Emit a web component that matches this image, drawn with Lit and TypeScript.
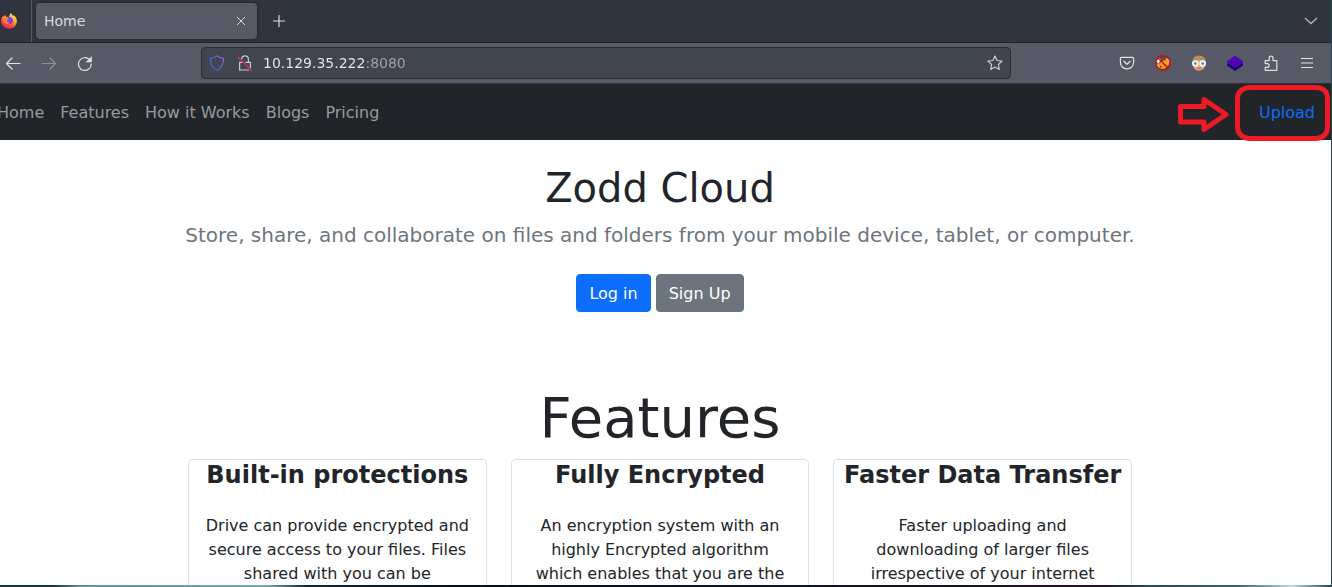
import { LitElement, html, css, svg } from "lit";
import { customElement } from "lit/decorators.js";

@customElement("browser-tabs")
class BrowserTabs extends LitElement {
  static styles = css`
    :host { display: block; }
    .strip { display: flex; align-items: center; height: 42px; background: #30343f; border-bottom: 1px solid #1f222b; color: #d6d9e2; }
    .pin { display: flex; align-items: center; justify-content: center; width: 43px; height: 42px; padding-right: 2px; border-right: 1px solid #565a66; box-sizing: border-box; }
    .tab { display: flex; align-items: center; justify-content: space-between; box-sizing: border-box; width: 221px; height: 36px; margin-left: 4px; padding: 0 8px; border-radius: 4px; background: #585966; box-shadow: 0 0 3px #1c1e26; font-size: 14px; }
    button { display: flex; align-items: center; justify-content: center; padding: 0; border: 0; background: none; color: inherit; }
    .close { width: 16px; height: 16px; }
    .new { width: 36px; height: 36px; margin-left: 4px; }
    .list { width: 36px; height: 36px; margin-left: auto; margin-right: 2px; color: #aeb2bd; }
  `;
  render() {
    return html`<div class="strip">
      <div class="pin">
        <svg width="16" height="16" viewBox="0 0 16 16">
          <defs>
            <linearGradient id="fx" x1=".8" y1="0" x2=".25" y2="1"><stop offset="0" stop-color="#fff44f" /><stop offset=".35" stop-color="#ffb02e" /><stop offset=".65" stop-color="#ff5634" /><stop offset="1" stop-color="#e0155f" /></linearGradient>
          </defs>
          <path fill="url(#fx)" d="M9.8 0c1.200 1 1.700 1.900 1.900 3l1.100-.8c2 1.500 3.200 3.600 3.100 6.200A7.900 7.600 0 0 1 8 15.800 7.900 7.600 0 0 1 .1 8.200C.1 5.700 1 3.900 2.200 2.400l.4 1.500L4.400 2l.6 1.700 2.700.2C8.500 2.700 8.700 1.300 9.800 0z" />
          <circle cx="8.400" cy="7.400" r="3.500" fill="#7a3de8" />
          <path d="M2.500 5.600c2-1.200 4.600-.8 5.700.4-1.200.2-1.600 1-2.400 1.600.4 1.500 1.800 2 3.500 1.400-1 2.200-5.100 2.600-6.500.5z" fill="#ff7a35" />
        </svg>
      </div>
      <div class="tab"><span>Home</span>
        <button class="close" aria-label="Close tab"><svg width="10" height="10" viewBox="0 0 10 10"><path d="M1 1l8 8M9 1L1 9" stroke="currentColor" stroke-width="1" /></svg></button>
      </div>
      <button class="new" aria-label="New tab"><svg width="14" height="14" viewBox="0 0 14 14"><path d="M7 1v12M1 7h12" stroke="currentColor" stroke-width="1.200" /></svg></button>
      <button class="list" aria-label="List all tabs"><svg width="14" height="14" viewBox="0 0 14 14" fill="none"><path d="M1 4l6 5.500L13 4" stroke="currentColor" stroke-width="1.300" /></svg></button>
    </div>`;
  }
}

const icon = (body: unknown) =>
  html`<svg width="16" height="16" viewBox="0 0 16 16" fill="none" stroke="currentColor" stroke-width="1.2" stroke-linecap="round" stroke-linejoin="round">${body}</svg>`;

const back = svg`<path d="M15 8.500H1.500M7 3L1.500 8.500 7 14" />`;
const forward = svg`<path d="M1 8.500h13.500M9 3l5.500 5.500L9 14" />`;
const reload = svg`<path d="M14.300 9A6.400 6.400 0 1 1 12.200 4.300" /><path d="M14.500 2v5h-5z" fill="currentColor" stroke-width=".6" />`;
const shield = svg`<defs><linearGradient id="sh" x1="1" y1="0" x2="0" y2="1"><stop offset="0" stop-color="#9a63e8" /><stop offset=".6" stop-color="#4568e0" /><stop offset="1" stop-color="#2f63d8" /></linearGradient></defs><path stroke="url(#sh)" d="M8 .9C6 2.600 3.800 3.100 1.400 3.300c-.1 5.200 1 9.200 6.600 11.900 5.600-2.700 6.700-6.700 6.600-11.900C12.200 3.100 10 2.600 8 .9z" />`;
const lock = svg`<path d="M4.700 3.600C5 1.700 6.300.8 8 .8c2 0 3.400 1.400 3.400 3.400v2.600M9 7.300h4.400v5.500M11.500 15H2.600V7.300h2.500" /><path d="M1.300 2.200l13.200 13.200" stroke="#e22850" stroke-width="1.400" />`;
const star = svg`<path d="M8 1l2.100 4.500 4.900.6-3.600 3.400.9 4.900L8 12l-4.300 2.400.9-4.900L1 6.100l4.900-.6z" />`;
const pocket = svg`<path d="M2.500 2.400h11c.7 0 1.100.4 1.100 1.100V7.500c0 3.700-2.900 6.300-6.600 6.300S1.400 11.200 1.400 7.500v-4c0-.7.4-1.100 1.100-1.100zM4.800 6.300L8 9.300l3.200-3" />`;
const noFox = svg`<g stroke="none"><circle cx="8" cy="8" r="7" fill="#5d4b48" /><path d="M1.200 6l3-3.500L6 5 3 9zM10.500 3l3.500 1 .5 4zM1.500 10l2.500-1 1 4.500z" fill="#eee" /><path d="M7 6.500l5-2.500 1.500 2 1 3-3 3.500-3 1.500-5-1L3 9.500 4.500 8z" fill="#f59a1d" /><path d="M4.500 10.500l2.500 1-1.500 1.200zM8.500 9.500l2.500.2-1 1.500z" fill="#5a3212" /></g><circle cx="8" cy="8" r="7.200" stroke="#c90d12" stroke-width="1.400" /><path d="M3 3l10 10" stroke="#c90d12" stroke-width="1.300" />`;
const face = svg`<g stroke="none"><path d="M1.200 9C.4 3.500 3.500.5 8 .5s7.600 3 6.800 8.500z" fill="#b08f66" /><path d="M2.300 8c1-2 3-3 5.700-3.200 2.700.2 4.700 1.200 5.700 3.200v3c0 2.700-2.700 4.500-5.700 4.500S2.300 13.700 2.300 11z" fill="#e5a77d" /><path d="M5.500 12.500h5l-1 1.500h-3z" fill="#cf6a55" /></g><circle cx="4.300" cy="8.500" r="2.500" fill="#75bac8" stroke="#f3fafa" stroke-width="1.700" /><circle cx="11.700" cy="8.500" r="2.500" fill="#75bac8" stroke="#f3fafa" stroke-width="1.700" /><path d="M4.300 8.500h.1M11.700 8.500h.1" stroke="#3f7b8a" stroke-width="1.500" />`;
const layers = svg`<g stroke="none"><path d="M0 8.500v2L8 16l8-5.500v-2z" fill="#21007a" /><path d="M8 .6l8 5.600v1.500L8 13 0 7.700V6.200z" fill="#4b08b5" /></g>`;
const puzzle = svg`<path d="M2.500 15.300h11.300V5.600H10V3a1.900 1.900 0 0 0-3.800 0v2.600H2.200v3h2a1.900 1.900 0 0 1 0 3.800h-2v2.600z" />`;
const menu = svg`<path d="M2 3.500h12M2 8h12M2 12.500h12" stroke-linecap="butt" />`;

@customElement("browser-toolbar")
class BrowserToolbar extends LitElement {
  static styles = css`
    :host { display: block; }
    .bar { display: flex; align-items: center; height: 40px; padding: 0 6px; background: #585966; border-bottom: 1px solid #30343f; color: #dfe1ea; }
    button { display: flex; align-items: center; justify-content: center; width: 36px; height: 32px; padding: 0; border: 0; background: none; color: inherit; }
    .dim { color: #8e909c; }
    .address { display: flex; align-items: center; flex: 1; box-sizing: border-box; height: 32px; margin: 0 98px; padding: 0 1px; border: 1px solid #292c35; border-radius: 4px; background: #414550; }
    .address button { width: 28px; color: #c9ccd6; }
    input { flex: 1; min-width: 0; height: 24px; margin-left: 4px; padding: 0; border: 0; outline: 0; font: 14px "DejaVu Sans", sans-serif; color: transparent; background: linear-gradient(90deg, #e9ebf2 103px, #a2a5af 103px); background-clip: text; -webkit-background-clip: text; }
  `;
  render() {
    return html`<div class="bar">
      <button aria-label="Back">${icon(back)}</button>
      <button class="dim" aria-label="Forward" disabled>${icon(forward)}</button>
      <button aria-label="Reload">${icon(reload)}</button>
      <div class="address">
        <button aria-label="Tracking protection">${icon(shield)}</button>
        <button aria-label="Connection not secure">${icon(lock)}</button>
        <input type="text" aria-label="Address" value="10.129.35.222:8080" spellcheck="false" />
        <button aria-label="Bookmark this page">${icon(star)}</button>
      </div>
      <button aria-label="Pocket">${icon(pocket)}</button>
      <button aria-label="Proxy switcher">${icon(noFox)}</button>
      <button aria-label="User agent">${icon(face)}</button>
      <button aria-label="Layers">${icon(layers)}</button>
      <button aria-label="Extensions">${icon(puzzle)}</button>
      <button aria-label="Menu">${icon(menu)}</button>
    </div>`;
  }
}

@customElement("cloud-page")
class CloudPage extends LitElement {
  static styles = css`
    :host { display: block; background: #fff; color: #212529; font-size: 16px; line-height: 24px; }
    nav { display: flex; align-items: center; box-sizing: border-box; height: 56px; padding-top: 2px; background: #212529; }
    a { text-decoration: none; }
    nav a { padding: 8px; color: #989a9c; }
    .links { display: flex; flex: 1; }
    .call { position: relative; padding-right: 8px; }
    .call a { color: #0d6efd; }
    .mark { position: absolute; top: -20px; right: 0; pointer-events: none; }
    .hero { padding: 24px 16px 72px; text-align: center; }
    h1, h2, h3, p { margin: 0; }
    h1 { font-size: 40px; line-height: 48px; font-weight: 400; }
    .lead { margin-top: 8px; font-size: 20px; line-height: 30px; color: #6c757d; }
    .actions { display: flex; justify-content: center; gap: 5px; margin-top: 24px; }
    .actions button { padding: 7px 12px 5px; border: 1px solid #0d6efd; border-radius: 4px; background: #0d6efd; color: #fff; font: inherit; }
    .actions .second { border-color: #6c757d; background: #6c757d; }
    h2 { font-size: 56px; line-height: 67px; font-weight: 400; text-align: center; }
    .cards { display: grid; grid-template-columns: repeat(3, 1fr); gap: 24px; max-width: 944px; margin: 8px auto 0; }
    .card { border: 1px solid #dfdfdf; border-radius: 4px; text-align: center; padding: 1px 0 24px; }
    h3 { font-size: 24px; line-height: 29px; font-weight: 700; }
    .card p { padding: 24px 16px 0; }
  `;
  private cards = [
    ["Built-in protections", "Drive can provide encrypted and secure access to your files. Files shared with you can be"],
    ["Fully Encrypted", "An encryption system with an highly Encrypted algorithm which enables that you are the"],
    ["Faster Data Transfer", "Faster uploading and downloading of larger files irrespective of your internet"],
  ];
  render() {
    return html`
      <nav>
        <div class="links">${["Home", "Features", "How it Works", "Blogs", "Pricing"].map((t) => html`<a href="#">${t}</a>`)}</div>
        <div class="call"><a href="#">Upload</a>
          <svg class="mark" width="156" height="60" viewBox="0 0 156 60" fill="none" stroke="#ed1c24" stroke-linejoin="round">
            <path d="M5.500 25.500H29V18.500l22 15-22 15V41H5.500z" stroke-width="5" />
            <path d="M75 6.500h66c7 0 11.500 4 11.500 11V46c0 7-5 11.500-12 11.500H75c-7 0-12.500-4.500-12.500-11.500V17.500c0-7 5.500-11 12.500-11z" stroke-width="5" />
          </svg>
        </div>
      </nav>
      <section class="hero">
        <h1>Zodd Cloud</h1>
        <p class="lead">Store, share, and collaborate on files and folders from your mobile device, tablet, or computer.</p>
        <div class="actions"><button>Log in</button><button class="second">Sign Up</button></div>
      </section>
      <section>
        <h2>Features</h2>
        <div class="cards">${this.cards.map(([t, b]) => html`<article class="card"><h3>${t}</h3><p>${b}</p></article>`)}</div>
      </section>`;
  }
}

@customElement("app-root")
class AppRoot extends LitElement {
  static styles = css`
    :host { display: flex; box-sizing: border-box; height: 100vh; overflow: hidden; padding: 0 1px 2px 0; font-family: "DejaVu Sans", sans-serif; background: linear-gradient(90deg, #173638 0, #173638 4%, #5d8f8e 6%, #78aaa8 20%, #12282f 23%, #050f18 34%, #101320 60%, #211522 83%, #28484c 86%, #35666a 93%, #b9dfdf 97%, #28444b 100%); }
    .window { flex: 1; min-width: 0; margin-left: -11px; overflow: hidden; background: #fff; }
  `;
  render() {
    return html`<div class="window"><browser-tabs></browser-tabs><browser-toolbar></browser-toolbar><cloud-page></cloud-page></div>`;
  }
}
